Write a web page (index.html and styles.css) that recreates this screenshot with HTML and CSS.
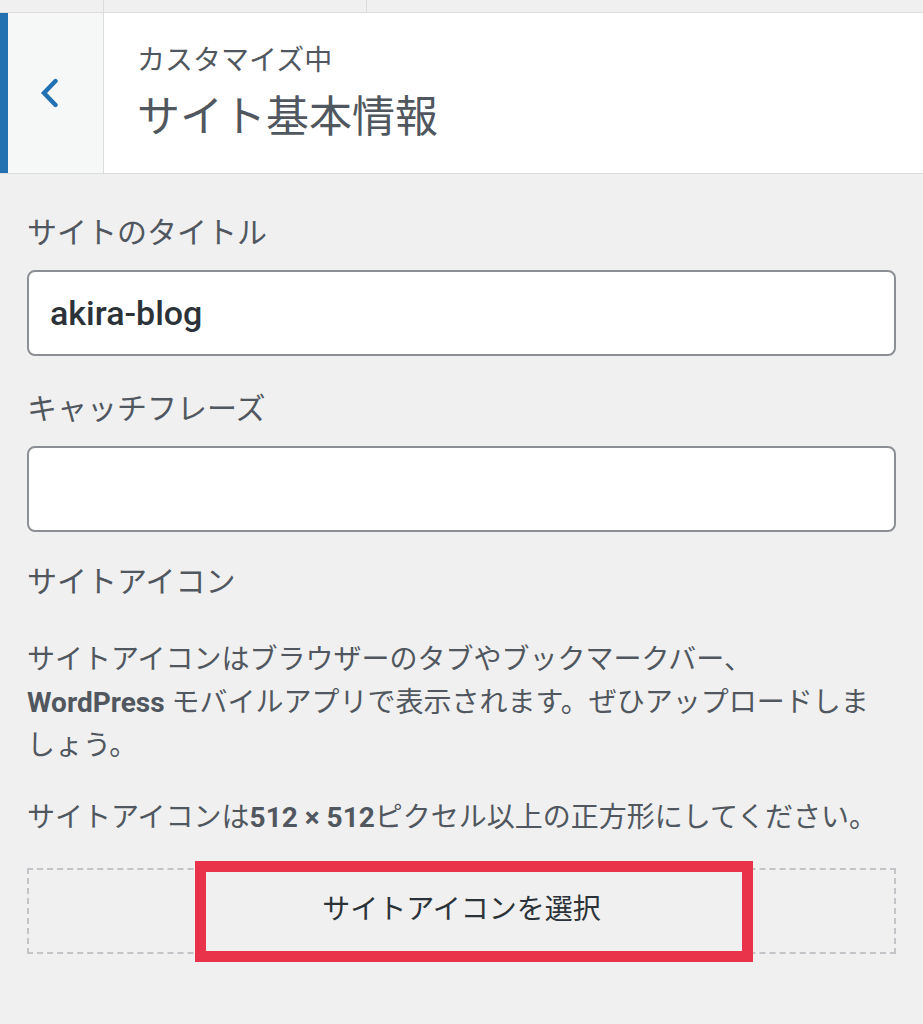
FILE: index.html
```html
<!DOCTYPE html>
<html lang="ja">
<head>
<meta charset="utf-8">
<title>カスタマイズ中 サイト基本情報</title>
<link rel="stylesheet" href="styles.css">
</head>
<body>
<div class="topstrip">
  <div class="ts-cell ts-a"></div>
  <div class="ts-cell ts-b"></div>
  <div class="ts-cell ts-c"></div>
</div>
<header class="header">
  <div class="accent"></div>
  <button class="back" aria-label="戻る">
    <svg width="18" height="30" viewBox="0 0 18 30"><path d="M15.5 3 L4 15 L15.5 27" fill="none" stroke="#2271b1" stroke-width="4.4" stroke-linecap="round" stroke-linejoin="miter"/></svg>
  </button>
  <div class="titles">
    <div class="sub">カスタマイズ中</div>
    <div class="title">サイト基本情報</div>
  </div>
</header>
<main class="content">
  <label class="label l1">サイトのタイトル</label>
  <div class="input">akira-blog</div>
  <label class="label l2">キャッチフレーズ</label>
  <div class="input"></div>
  <div class="label l3">サイトアイコン</div>
  <p class="desc d1">サイトアイコンはブラウザーのタブやブックマークバー、<br><b>WordPress</b> モバイルアプリで表示されます。ぜひアップロードしましょう。</p>
  <p class="desc d2">サイトアイコンは<b>512 × 512</b>ピクセル以上の正方形にしてください。</p>
  <div class="placeholder">
    <button class="select">サイトアイコンを選択</button>
    <div class="annot"></div>
  </div>
</main>
</body>
</html>
```
FILE: styles.css
```css
* { box-sizing: border-box; }
html, body { margin: 0; padding: 0; }
body {
  width: 923px;
  height: 1024px;
  overflow: hidden;
  background: #f0f0f0;
  font-family: "Roboto", "Noto Sans CJK JP", sans-serif;
  color: #50575e;
}
.topstrip {
  display: flex;
  height: 13px;
  background: #f0f0f0;
  border-bottom: 1px solid #dcdcde;
}
.ts-cell { height: 100%; }
.ts-a { width: 104px; border-right: 1px solid #dcdcde; }
.ts-b { width: 263px; border-right: 1px solid #dcdcde; }
.ts-c { flex: 1; }
.header {
  display: flex;
  height: 161px;
  background: #fff;
  border-bottom: 1px solid #dcdcde;
}
.accent { width: 8px; background: #2271b1; }
.back {
  width: 96px;
  border: 0;
  border-right: 1px solid #dcdcde;
  background: #f6f7f7;
  display: flex;
  align-items: center;
  justify-content: center;
  padding: 0 13px 0 0;
  margin: 0;
}
.titles {
  padding: 30px 0 0 33px;
}
.sub {
  font-size: 28px;
  line-height: 36px;
  color: #50575e;
}
.title {
  font-size: 43px;
  line-height: 56px;
  margin-top: 10px;
  color: #50575e;
}
.content {
  padding: 36px 27px 0 27px;
}
.label {
  display: block;
  font-size: 30px;
  line-height: 45px;
  color: #50575e;
}
.input {
  height: 86px;
  background: #fff;
  border: 2px solid #8c8f94;
  border-radius: 8px;
  margin-top: 15px;
  padding: 0 0 0 21px;
  display: flex;
  align-items: center;
  font-size: 34px;
  font-weight: 500;
  color: #2c3338;
}
.l2 { margin-top: 30px; }
.l3 { margin-top: 27px; }
.desc {
  margin: 0;
  font-size: 28px;
  line-height: 43px;
  color: #50575e;
}
.desc b { font-weight: 700; color: #50575e; }
.d1 { margin-top: 34px; }
.d2 { margin-top: 29px; }
.placeholder {
  position: relative;
  margin-top: 29px;
  height: 86px;
  border: 2px dashed #c3c4c7;
  display: flex;
  align-items: center;
  justify-content: center;
}
.select {
  border: 0;
  background: transparent;
  font-family: "Roboto", "Noto Sans CJK JP", sans-serif;
  font-size: 28px;
  line-height: 40px;
  color: #2c3338;
  padding: 0 0 3px 0;
}
.annot {
  position: absolute;
  left: 166px;
  top: -9px;
  width: 558px;
  height: 101px;
  border: 11px solid #e8334a;
  pointer-events: none;
}
```
